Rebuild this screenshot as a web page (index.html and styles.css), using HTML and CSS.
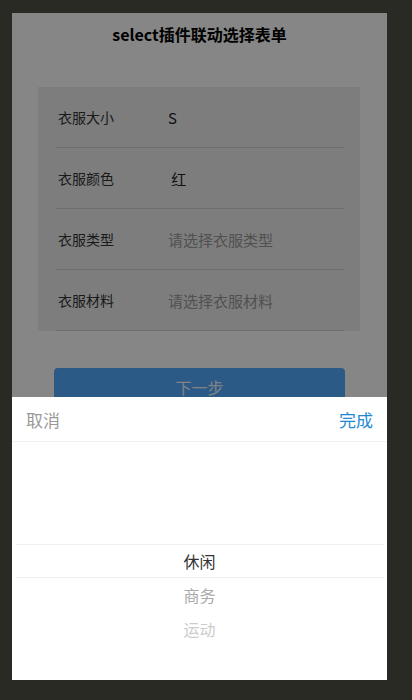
FILE: index.html
```html
<!DOCTYPE html>
<html lang="zh-CN">
<head>
    <meta charset="UTF-8">
    <meta name="viewport" content="width=device-width, initial-scale=1.0">
    <title>select插件联动选择表单</title>
    <link rel="stylesheet" href="styles.css">
</head>
<body>
    <div class="phone">
        <h1 class="title">select插件联动选择表单</h1>

        <div class="form-card">
            <div class="form-row">
                <span class="label">衣服大小</span>
                <span class="value">S</span>
            </div>
            <div class="form-row">
                <span class="label">衣服颜色</span>
                <span class="value">&nbsp;红</span>
            </div>
            <div class="form-row">
                <span class="label">衣服类型</span>
                <span class="value placeholder">请选择衣服类型</span>
            </div>
            <div class="form-row">
                <span class="label">衣服材料</span>
                <span class="value placeholder">请选择衣服材料</span>
            </div>
        </div>

        <button class="btn-next">下一步</button>

        <!-- picker mask + sheet -->
        <div class="mask"></div>
        <div class="picker">
            <div class="picker-header">
                <span class="picker-cancel">取消</span>
                <span class="picker-done">完成</span>
            </div>
            <div class="picker-wheel">
                <div class="wheel-highlight"></div>
                <ul class="wheel-list">
                    <li class="wheel-item selected">休闲</li>
                    <li class="wheel-item near">商务</li>
                    <li class="wheel-item far">运动</li>
                </ul>
            </div>
        </div>
    </div>
</body>
</html>
```

FILE: styles.css
```css
* {
    margin: 0;
    padding: 0;
    box-sizing: border-box;
    font-family: "Noto Sans CJK SC", "Noto Sans", sans-serif;
}

body {
    background-color: #2a2a25;
    padding: 13px 0 0 12px;
}

.phone {
    position: relative;
    width: 375px;
    height: 667px;
    background-color: #ffffff;
    overflow: hidden;
}

.title {
    height: 42px;
    line-height: 42px;
    text-align: center;
    font-size: 16px;
    font-weight: 700;
    color: #000;
}

.form-card {
    margin: 32px 27px 0 26px;
    padding: 0 16px 0 18px;
    background-color: #eeeeee;
}

.form-row {
    display: flex;
    align-items: center;
    height: 61px;
    padding-left: 2px;
    border-bottom: 1px solid #d2d2d2;
}

.label {
    width: 110px;
    font-size: 14px;
    color: #333;
}

.value {
    font-size: 15px;
    color: #222;
}

.placeholder {
    color: #999;
}

.btn-next {
    display: block;
    width: 291px;
    height: 38px;
    margin: 37px auto 0;
    border: none;
    border-radius: 4px;
    background-color: #54abff;
    color: #f4f8ff;
    font-size: 16px;
}

/* modal */
.mask {
    position: absolute;
    top: 0;
    left: 0;
    width: 100%;
    height: 100%;
    background: rgba(0, 0, 0, 0.475);
}

.picker {
    position: absolute;
    left: 0;
    bottom: 0;
    width: 100%;
    height: 283px;
    background-color: #fff;
}

.picker-header {
    display: flex;
    justify-content: space-between;
    align-items: center;
    height: 45px;
    padding: 0 14px;
    border-bottom: 1px solid #f2f2f2;
    font-size: 17px;
}

.picker-cancel {
    color: #999;
}

.picker-done {
    color: #1e8ad6;
}

.picker-wheel {
    position: relative;
    height: 238px;
    padding-top: 102px;
}

.wheel-highlight {
    position: absolute;
    top: 102px;
    left: 4px;
    right: 3px;
    height: 34px;
    border-top: 1px solid #f0f0f0;
    border-bottom: 1px solid #f0f0f0;
}

.wheel-list {
    list-style: none;
}

.wheel-item {
    height: 34px;
    line-height: 34px;
    text-align: center;
    font-size: 16px;
}

.selected {
    color: #333;
}

.near {
    color: #aaa;
}

.far {
    color: #ccc;
}
```
